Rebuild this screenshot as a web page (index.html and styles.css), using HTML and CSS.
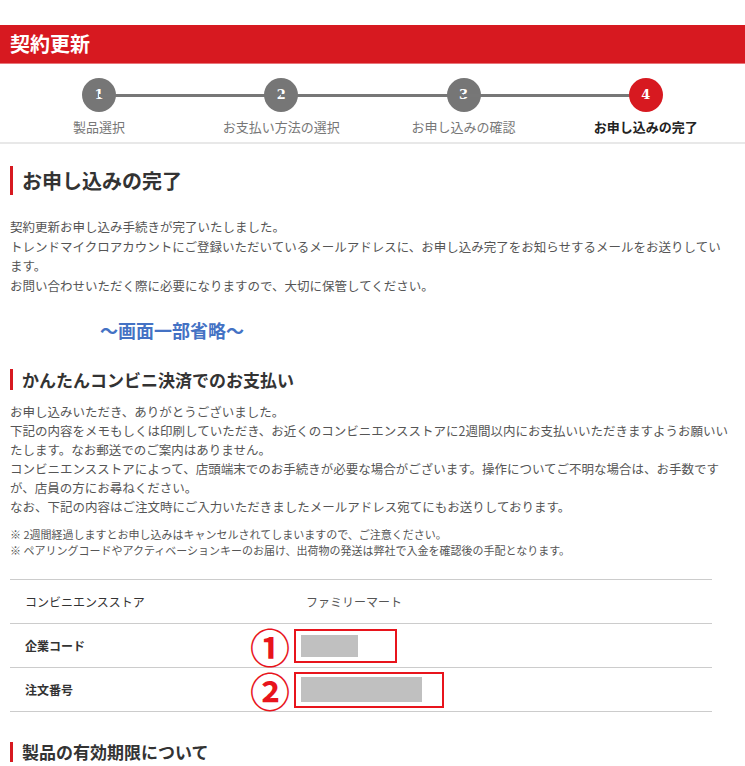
FILE: index.html
```html
<!DOCTYPE html>
<html lang="ja">
<head>
<meta charset="UTF-8">
<meta name="viewport" content="width=device-width, initial-scale=1.0">
<title>契約更新</title>
<link rel="stylesheet" href="styles.css">
</head>
<body>

<div class="page-header">
    <h1>契約更新</h1>
</div>

<ol class="steps">
    <li class="step"><span class="step-num">1</span><span class="step-label">製品選択</span></li>
    <li class="step"><span class="step-num">2</span><span class="step-label">お支払い方法の選択</span></li>
    <li class="step"><span class="step-num">3</span><span class="step-label">お申し込みの確認</span></li>
    <li class="step current"><span class="step-num">4</span><span class="step-label">お申し込みの完了</span></li>
</ol>

<div class="content">
    <h2 class="title-main">お申し込みの完了</h2>
    <p class="text">
        契約更新お申し込み手続きが完了いたしました。<br>
        トレンドマイクロアカウントにご登録いただいているメールアドレスに、お申し込み完了をお知らせするメールをお送りしています。<br>
        お問い合わせいただく際に必要になりますので、大切に保管してください。
    </p>

    <p class="omitted">〜画面一部省略〜</p>

    <h3 class="title-sub">かんたんコンビニ決済でのお支払い</h3>
    <p class="text">
        お申し込みいただき、ありがとうございました。<br>
        下記の内容をメモもしくは印刷していただき、お近くのコンビニエンスストアに2週間以内にお支払いいただきますようお願いいたします。なお郵送でのご案内はありません。<br>
        コンビニエンスストアによって、店頭端末でのお手続きが必要な場合がございます。操作についてご不明な場合は、お手数ですが、店員の方にお尋ねください。<br>
        なお、下記の内容はご注文時にご入力いただきましたメールアドレス宛てにもお送りしております。
    </p>
    <p class="note">
        ※ 2週間経過しますとお申し込みはキャンセルされてしまいますので、ご注意ください。<br>
        ※ ペアリングコードやアクティベーションキーのお届け、出荷物の発送は弊社で入金を確認後の手配となります。
    </p>

    <table class="pay-table">
        <tr>
            <th>コンビニエンスストア</th>
            <td class="store">ファミリーマート</td>
        </tr>
        <tr>
            <th class="strong">企業コード</th>
            <td>
                <span class="mark mark-code"><span class="badge">①</span><span class="hidden-value"></span></span>
            </td>
        </tr>
        <tr>
            <th class="strong">注文番号</th>
            <td>
                <span class="mark mark-order"><span class="badge">②</span><span class="hidden-value"></span></span>
            </td>
        </tr>
    </table>

    <h3 class="title-sub last">製品の有効期限について</h3>
</div>

</body>
</html>
```

FILE: styles.css
```css
body {
    margin: 0;
    font-family: "Noto Sans CJK JP", "Noto Sans", sans-serif;
    color: #555;
    background: #fff;
}

.page-header {
    margin-top: 25px;
    height: 38px;
    padding: 0 10px;
    background-color: #d71920;
    border-bottom: 1px solid #e8767a;
}

.page-header h1 {
    margin: 0;
    color: #fff;
    font-size: 20px;
    line-height: 38px;
    font-weight: bold;
}

/* ステップ表示 */
.steps {
    display: flex;
    list-style: none;
    margin: 0;
    padding: 14px 8px 6px;
    border-bottom: 2px solid #e8e8e8;
}

.step {
    flex: 1;
    position: relative;
    display: flex;
    flex-direction: column;
    align-items: center;
}

.step + .step::before {
    content: "";
    position: absolute;
    top: 16px;
    left: -50%;
    width: 100%;
    height: 3px;
    background-color: #777;
}

.step-num {
    position: relative;
    width: 34px;
    height: 34px;
    border-radius: 50%;
    background-color: #767676;
    color: #fff;
    font-family: "DejaVu Serif", "Liberation Serif", serif;
    font-size: 13px;
    font-weight: bold;
    line-height: 34px;
    text-align: center;
}

.step-label {
    margin-top: 6px;
    font-size: 13px;
    line-height: 18px;
    color: #777;
}

.current .step-num {
    background-color: #d71920;
}

.current .step-label {
    color: #222;
    font-weight: bold;
}

/* 本文 */
.content {
    padding: 0 13px 0 10px;
}

.title-main,
.title-sub {
    margin: 0;
    padding-left: 9px;
    border-left: 3px solid #d71920;
    color: #333;
    font-weight: bold;
}

.title-main {
    margin-top: 22px;
    font-size: 20px;
    line-height: 29px;
}

.title-sub {
    margin-top: 26px;
    font-size: 17px;
    line-height: 21px;
}

.text {
    margin: 12px 0 0;
    font-size: 12.5px;
    line-height: 19px;
}

.title-main + .text {
    margin-top: 22px;
    line-height: 19.5px;
}

.omitted {
    margin: 22px 0 0 90px;
    color: #4472c4;
    font-size: 18px;
    font-weight: bold;
    line-height: 26px;
}

.note {
    margin: 10px 0 0;
    font-size: 11px;
    line-height: 16px;
}

.pay-table {
    width: 702px;
    margin-top: 21px;
    border-collapse: collapse;
    border-top: 1px solid #ccc;
}

.pay-table tr {
    border-bottom: 1px solid #ccc;
}

.pay-table th,
.pay-table td {
    height: 43px;
    padding: 0;
    font-size: 12px;
    text-align: left;
    vertical-align: middle;
}

.pay-table th {
    width: 269px;
    padding-left: 15px;
    color: #333;
    font-weight: normal;
}

.pay-table th.strong {
    font-weight: bold;
}

.pay-table td.store {
    padding-left: 12px;
}

/* 注釈の赤枠 */
.mark {
    position: relative;
    display: inline-block;
    vertical-align: middle;
    border: 2px solid #e8141c;
}

.mark-code {
    padding: 4px 37px 4px 5px;
}

.mark-order {
    padding: 3px 20px 4px 5px;
}

.hidden-value {
    display: block;
    background-color: #c0c0c0;
}

.mark-code .hidden-value {
    width: 57px;
    height: 22px;
}

.mark-order .hidden-value {
    width: 121px;
    height: 25px;
}

.badge {
    position: absolute;
    top: 50%;
    right: 100%;
    height: 36px;
    margin-right: 6px;
    transform: translateY(-50%);
    color: #e8141c;
    font-size: 40px;
    font-weight: bold;
    line-height: 36px;
}

.last {
    margin-top: 30px;
    line-height: 20px;
}
```
